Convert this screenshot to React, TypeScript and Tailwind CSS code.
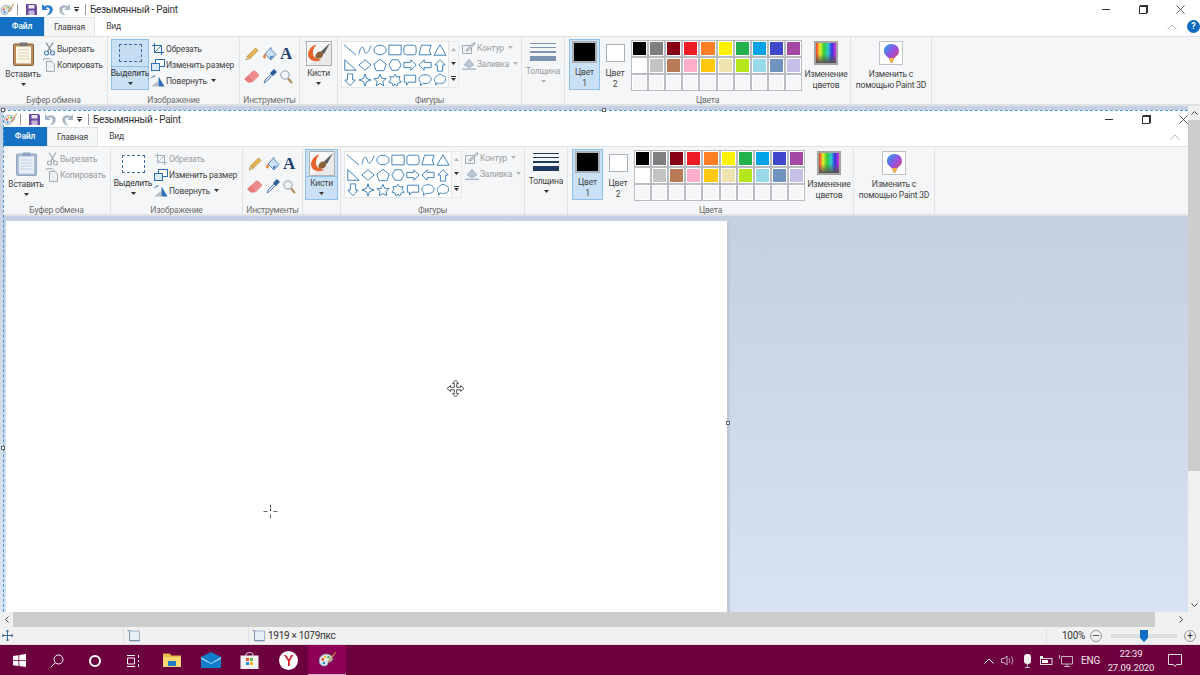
import React from "react";

const font = { fontFamily: 'Roboto,"Noto Sans",sans-serif' };

const Caret = ({ c = "#333" }: { c?: string }) => (
  <svg width="5" height="3" viewBox="0 0 5 3" className="shrink-0"><path d="M0 0h5L2.500 3z" fill={c} /></svg>
);

const PaintLogo = ({ s = 16 }: { s?: number }) => (
  <svg width={s} height={s} viewBox="0 0 16 16" className="shrink-0">
    <path d="M1 9c0-4 4-6 7-5.500 3 .5 5 2.500 4 5-.8 2-3 1-3.500 2.500-.4 1.500-1 2.500-3 2.500C3 13.500 1 12 1 9z" fill="#dfe8f2" stroke="#7c8ea6" strokeWidth=".7" />
    <circle cx="4" cy="8" r="1.200" fill="#e8503a" />
    <circle cx="6" cy="5.800" r="1.100" fill="#f3c32c" />
    <circle cx="8.800" cy="6" r="1" fill="#49a84c" />
    <circle cx="5" cy="11" r="1.100" fill="#2f7fd1" />
    <path d="M8 10L14.500 1.500l.7.6L9 10.800z" fill="#c98a3c" />
  </svg>
);

const Save = () => (
  <svg width="11" height="11" viewBox="0 0 11 11">
    <path d="M0 0h9.500L11 1.500V11H0z" fill="#6a4a9c" />
    <rect x="2.500" y="1" width="6" height="3.500" fill="#e7e3f1" />
    <rect x="2.500" y="6.500" width="6" height="4.500" fill="#c3b5dc" />
  </svg>
);

const Undo = ({ c, flip }: { c: string; flip?: boolean }) => (
  <svg width="11" height="12" viewBox="0 0 11 12" className={flip ? "-scale-x-100" : ""}>
    <path d="M0 0v6h6L3.800 3.900C6 2.800 8.500 4.500 7.500 7.500 7 9 6 10.200 4.500 11.500 8 11 11 8.500 10.800 5 10.500 1.500 6 0 2.400 2.300z" fill={c} />
  </svg>
);

const Clipboard = ({ dim }: { dim?: boolean }) => (
  <svg width="21" height="24" viewBox="0 0 21 24">
    <rect x=".5" y="2" width="20" height="21.500" rx="1" fill={dim ? "#aebfd5" : "#b98a5e"} stroke={dim ? "#8ea4c0" : "#8b6239"} />
    <rect x="3" y="4.500" width="15" height="17" fill={dim ? "#e8eef6" : "#fbf6e5"} />
    <path d="M5 8h11M5 11h11M5 14h11M5 17h11" stroke={dim ? "#c5d2e2" : "#d9d2b8"} />
    <rect x="6.500" y=".5" width="8" height="3.500" fill={dim ? "#8ea4c0" : "#777"} />
  </svg>
);

const Scissors = ({ dim }: { dim?: boolean }) => (
  <svg width="11" height="14" viewBox="0 0 11 14" fill="none" stroke={dim ? "#a4a8ae" : "#4d7fc0"} strokeWidth="1.200">
    <path d="M2 0.500L7.500 9.500M9 0.500L3.500 9.500" stroke={dim ? "#a4a8ae" : "#7b8794"} />
    <circle cx="2.500" cy="11" r="2" />
    <circle cx="8.500" cy="11" r="2" />
  </svg>
);

const Copy = () => (
  <svg width="12" height="14" viewBox="0 0 12 14">
    <path d="M.5 2.500V.5h6l2 2v1" fill="#e7e9ec" stroke="#b3b7bd" />
    <path d="M3.500 3.500h5.500l2.500 2.500v7.500h-8z" fill="#eef0f3" stroke="#a8adb4" />
  </svg>
);

const Crop = ({ dim }: { dim?: boolean }) => (
  <svg width="12" height="12" viewBox="0 0 12 12" fill="none" stroke={dim ? "#9eb0c4" : "#2e6fb3"}>
    <path d="M2.500 0v9.500H12M0 2.500h9.500V12" />
    <path d="M2.500 9.500L10 2" strokeWidth=".8" />
  </svg>
);

const Resize = () => (
  <svg width="14" height="12" viewBox="0 0 14 12" fill="none" stroke="#2e6fb3">
    <rect x="4.500" y=".5" width="9" height="7" fill="#fff" />
    <rect x=".5" y="4.500" width="8" height="7" fill="#dbe8f5" />
  </svg>
);

const Rotate = () => (
  <svg width="14" height="12" viewBox="0 0 14 12">
    <path d="M0 11.500L7 11.500 7 6z" fill="#b9bdc3" />
    <path d="M7.500 11.500V1.500L13.500 11.500z" fill="#2e6fb3" />
    <path d="M0 3.500C1 1.800 2.500 1 4.500 1" fill="none" stroke="#2e6fb3" />
  </svg>
);

const Pencil = () => (
  <svg width="14" height="14" viewBox="0 0 14 14">
    <path d="M2.500 9L10.500 1l2.500 2.500L5 11.500z" fill="#e8b64c" stroke="#a27b2c" strokeWidth=".6" />
    <path d="M2.500 9L1 13l4-1.500z" fill="#f3dfb8" stroke="#a27b2c" strokeWidth=".6" />
  </svg>
);
const Fill = () => (
  <svg width="15" height="14" viewBox="0 0 15 14">
    <path d="M3 7l5-5.500 6 6L9 13z" fill="#cfe0f2" stroke="#5a8cbd" />
    <path d="M8 9.500v3l4-4z" fill="#3a7cc2" />
    <path d="M3 6.500C1.500 8 .5 9.500 1.500 11c1 1 2.500 0 2.200-1.500-.1-1-.3-2-.7-3z" fill="#e5782b" />
    <path d="M7 1L9.200 0l1.300 3z" fill="#8aa7c4" />
  </svg>
);
const Eraser = () => (
  <svg width="15" height="13" viewBox="0 0 15 13">
    <path d="M.5 9L8.500 1.500c1-.9 2-.9 3 0l2.500 2.200c.9 1 .8 2 0 2.800l-5.500 5.500h-4.500z" fill="#ee8b8b" stroke="#d77777" strokeWidth=".5" />
    <path d="M4 12.500L.5 9l3.500-3.500 4 4.500-1.800 2.500z" fill="#e87a7a" />
  </svg>
);
const Picker = () => (
  <svg width="14" height="15" viewBox="0 0 14 15">
    <path d="M1 14l1-3L8 5l1.500 1.500-6 6z" fill="#cfe0ef" stroke="#3b6fa8" strokeWidth=".8" />
    <path d="M7 4l4-4 3 3-4 4z" fill="#2a5f9c" />
  </svg>
);
const Magnifier = () => (
  <svg width="13" height="14" viewBox="0 0 13 14" fill="none">
    <circle cx="5" cy="5" r="4.200" fill="#eef4fa" stroke="#8e9caa" />
    <path d="M8 8.500l4 4.500" stroke="#b08a55" strokeWidth="2" />
  </svg>
);

const Brush = () => (
  <svg width="26" height="25" viewBox="0 0 26 25" className="shrink-0">
    <rect x=".5" y=".5" width="25" height="24" fill="#f7f7f7" stroke="#b0b0b0" />
    <path d="M25 1L25 24 3 24z" fill="#e9e9e9" />
    <path d="M2 13.500C2.500 8 6 4.500 10.500 3.500 8 6.500 6.500 9.500 7 13c.4 3 3 5 8 5.500-2.500 3-12.500 2.500-13-5z" fill="#e8622a" />
    <path d="M9.500 16c-.5-3 2.500-6 5.500-5.500 2.500.6 2.800 3.300 1 5.500-2 2.300-6 2.300-6.500 0z" fill="#8a6236" />
    <path d="M15 10.500l9-8.500-6 11z" fill="#5c5c5c" />
  </svg>
);

const SHAPES: React.ReactNode[] = [
  <path d="M1 2l14 12" />,
  <path d="M1 13C3 3 6 3 7 8s4 6 8-5" />,
  <ellipse cx="8" cy="8" rx="7" ry="5.500" />,
  <rect x="1" y="2.500" width="14" height="11" />,
  <rect x="1" y="2.500" width="14" height="11" rx="3" />,
  <path d="M4 2.500h11L13 9l2 4.500H1z" />,
  <path d="M8 2l7 12H1z" />,
  <path d="M2 2v12h13z" />,
  <path d="M8 2l7 6-7 6-7-6z" />,
  <path d="M8 1.500l7 5.500-2.500 7.500h-9L1 7z" />,
  <path d="M4.500 2h7L15 8l-3.500 6h-7L1 8z" />,
  <path d="M1 5h8V2l6 6-6 6v-3H1z" />,
  <path d="M15 5H7V2L1 8l6 6v-3h8z" />,
  <path d="M5 15V8H2l6-6 6 6h-3v7z" />,
  <path d="M5 1v7H2l6 6.500L14 8h-3V1z" />,
  <path d="M8 1l1.800 5.200L15 8l-5.200 1.800L8 15l-1.800-5.200L1 8l5.200-1.800z" />,
  <path d="M8 1.500l2 4.500 5 .5-3.800 3.200 1.200 5L8 12l-4.400 2.700 1.200-5L1 6.500l5-.5z" />,
  <path d="M8 1.500l2 3 3.700-.5-1 3.500L15 10.500l-3.500 1L10 15l-2-2.500L6 15l-1.500-3.500L1 10.500l2.300-3-1-3.500L6 4.500z" />,
  <path d="M1.500 2.500h13v8h-8L4 14v-3.500H1.500z" />,
  <path d="M8 2c4 0 7 2 7 5s-3 5-7 5c-.8 0-1.500 0-2-.2L3 14.500v-3.700C1.800 9.800 1 8.500 1 7c0-3 3-5 7-5z" />,
  <path d="M5 3c1-2 5-2 6 0 3 0 4 3 3 5 .5 2-1.500 4-4 3.500-1.500 1-4 1-5-.5L3 14v-3C1 10 .5 5 5 3z" />,
];

const ShapeIcon = ({ children }: { children: React.ReactNode }) => (
  <div className="w-[15px] h-[15px] flex items-center justify-center">
    <svg width="14" height="14" viewBox="0 0 16 16" fill="#fff" stroke="#3d80b8" strokeWidth="1.100" strokeLinejoin="round">{children}</svg>
  </div>
);

const COLORS = [
  "#000000", "#7f7f7f", "#880015", "#ed1c24", "#ff7f27", "#fff200", "#22b14c", "#00a2e8", "#3f48cc", "#a349a4",
  "#ffffff", "#c3c3c3", "#b97a57", "#ffaec9", "#ffc90e", "#efe4b0", "#b5e61d", "#99d9ea", "#7092be", "#c8bfe7",
  "#f5f6f7", "#f5f6f7", "#f5f6f7", "#f5f6f7", "#f5f6f7", "#f5f6f7", "#f5f6f7", "#f5f6f7", "#f5f6f7", "#f5f6f7",
];

const Group = ({ w, label, children }: { w: string; label?: string; children: React.ReactNode }) => (
  <div className={`${w} shrink-0 h-full flex flex-col border-r border-[#e2e3e6]`}>
    <div className="flex-1 min-h-0 flex">{children}</div>
    <div className="h-[9px] text-center text-[8.500px] leading-[10px] text-[#6b6b6b]">{label}</div>
  </div>
);

const SmallRow = ({ icon, text, dim, caret }: { icon: React.ReactNode; text: string; dim?: boolean; caret?: boolean }) => (
  <div className={`h-[16px] flex items-center gap-[1px] text-[8.500px] whitespace-nowrap ${dim ? "text-[#9a9da1]" : "text-[#444]"}`}>
    <div className="w-[14px] flex items-center justify-center shrink-0">{icon}</div>
    <span>{text}</span>
    {caret && <span className="ml-[3px] mb-[2px]"><Caret c={dim ? "#b5b5b5" : "#333"} /></span>}
  </div>
);

const Ribbon = ({ inner }: { inner?: boolean }) => (
  <div style={font} className="w-[1200px] shrink-0 h-[106px] flex flex-col bg-white text-[#444] tracking-[-0.2px]">
    {/* title bar */}
    <div className="h-[17px] pt-[2px] flex items-center">
      <PaintLogo s={15} />
      <div className="w-px h-[11px] bg-[#999] ml-[2px] mr-[8px]" />
      <Save />
      <div className="ml-[5px]"><Undo c={inner ? "#a9b6c6" : "#2f7fd1"} /></div>
      <div className="ml-[6px]"><Undo c="#a9b6c6" flip /></div>
      <div className="ml-[4px] flex flex-col items-center gap-[1px]"><div className="w-[5px] h-px bg-[#333]" /><Caret /></div>
      <div className="w-px h-[11px] bg-[#999] ml-[6px] mr-[4px]" />
      <span className="text-[10px] tracking-[-0.3px] text-[#333]">Безымянный - Paint</span>
      <div className="flex-1" />
      <div className="w-[8px] h-px bg-[#333]" />
      <div className="ml-[29px] w-[8px] h-[8px] border border-[#333] bg-white shadow-[1px_-1px_0_0_#333]" />
      <svg width="9" height="9" viewBox="0 0 9 9" className="ml-[29px] mr-[15px]" stroke="#333" strokeWidth=".8"><path d="M.5.5l8 8M8.500.5l-8 8" /></svg>
    </div>
    {/* tabs */}
    <div className="h-[19px] flex items-stretch text-[8.500px]">
      <div className="w-[44px] bg-[#1571c4] text-white flex items-center justify-center font-medium">Файл</div>
      <div className="w-[51px] bg-[#f5f6f7] border-x border-t border-[#e2e3e6] flex items-center justify-center">Главная</div>
      <div className="w-[37px] flex items-center justify-center">Вид</div>
      <div className="flex-1" />
      <svg width="10" height="6" viewBox="0 0 10 6" fill="none" stroke="#b5b5b5" className="self-center mr-[2px]"><path d="M.5 5.500L5 1l4.500 4.500" /></svg>
      {inner ? (
        <div className="ml-[8px] w-[13px]" />
      ) : (
        <div className="self-center ml-[8px] w-[13px] h-[13px] rounded-full bg-[#0f6cc4] text-white text-[9px] font-bold flex items-center justify-center">?</div>
      )}
    </div>
    {/* body */}
    <div className="flex-1 min-h-0 flex bg-[#f5f6f7] border-t border-[#e0e1e3] border-b-[2px] border-b-[#dfe1e5] text-[8.500px]">
      <Group w="w-[108px]" label="Буфер обмена">
        <div className="w-[42px] pl-[4px] pt-[4px] flex flex-col items-center">
          <div className="h-[25px] flex items-center"><Clipboard dim={inner} /></div>
          <div className="mt-[2px] leading-[12px]">Вставить</div>
          <div className="mt-[3px]"><Caret /></div>
        </div>
        <div className="pt-[4px]">
          <SmallRow icon={<Scissors dim={inner} />} text="Вырезать" dim={inner} />
          <SmallRow icon={<Copy />} text="Копировать" dim={inner} />
        </div>
      </Group>
      <Group w="w-[132px]" label="Изображение">
        <div className={`ml-[3px] mt-[2px] w-[38px] h-[51px] flex flex-col items-center border ${inner ? "border-transparent" : "border-[#8fc0e8] bg-[#c9e0f5]"}`}>
          <div className={`w-full h-[27px] flex items-center justify-center ${inner ? "" : "border-b border-[#8fc0e8]"}`}>
            <div className={`w-[23px] h-[18px] border border-dashed border-[#3d6ea5] ${inner ? "bg-white" : "bg-[#c6dcf3]"}`} />
          </div>
          <div className="leading-[12px] whitespace-nowrap text-[#333]">Выделить</div>
          <div className="mt-[3px]"><Caret /></div>
        </div>
        <div className="pl-[2px] pt-[4px]">
          <SmallRow icon={<Crop dim={inner} />} text="Обрезать" dim={inner} />
          <SmallRow icon={<Resize />} text="Изменить размер" />
          <SmallRow icon={<Rotate />} text="Повернуть" caret />
        </div>
      </Group>
      <Group w="w-[60px]" label="Инструменты">
        <div className="pl-[2px] pt-[5px] grid grid-cols-[19px_17px_16px] grid-rows-[23px_23px] justify-items-center items-center">
          <Pencil />
          <Fill />
          <span style={{ fontFamily: '"Liberation Serif",serif' }} className="text-[17px] leading-none font-bold text-[#1f3f6e]">A</span>
          <Eraser />
          <Picker />
          <Magnifier />
        </div>
      </Group>
      <Group w="w-[38px]">
        <div className={`ml-[2px] mt-[2px] w-[33px] h-[51px] flex flex-col items-center border ${inner ? "border-[#8fc0e8] bg-[#c9e0f5]" : "border-transparent"}`}>
          <div className={`h-[27px] flex items-center ${inner ? "w-full justify-center border-b border-[#8fc0e8]" : ""}`}><Brush /></div>
          <div className="leading-[12px]">Кисти</div>
          <div className="mt-[3px]"><Caret /></div>
        </div>
      </Group>
      <Group w="w-[184px]" label="Фигуры">
        <div className="ml-[3px] mt-[4px] w-[108px] h-[47px] bg-white border border-[#e3e5e8] grid grid-cols-7 content-start">
          {SHAPES.map((s, i) => <ShapeIcon key={i}>{s}</ShapeIcon>)}
        </div>
        <div className="mt-[4px] w-[10px] h-[47px] flex flex-col items-center justify-around bg-[#f5f6f7] border border-l-0 border-[#e8e9eb]">
          <svg width="5" height="3" viewBox="0 0 5 3"><path d="M0 3h5L2.500 0z" fill="#b5b5b5" /></svg>
          <Caret />
          <div className="flex flex-col items-center gap-[1px]"><div className="w-[5px] h-px bg-[#333]" /><Caret /></div>
        </div>
        <div className="pl-[3px] pt-[3px]">
          <SmallRow dim caret icon={<svg width="14" height="12" viewBox="0 0 14 12" fill="none" stroke="#a3acb7"><path d="M.5 3.500h9v8h-9z" fill="#eef0f3" /><path d="M4 8l8-7.500 1.500 1L5 9.500z" fill="#ccd3db" /></svg>} text="Контур" />
          <SmallRow dim caret icon={<svg width="14" height="12" viewBox="0 0 14 12"><path d="M0 10.500h14V12H0z" fill="#a9bfd6" /><path d="M2 7l5-6 5 6-5 3z" fill="#b9c6d4" stroke="#9daab8" strokeWidth=".6" /></svg>} text="Заливка" />
        </div>
      </Group>
      <Group w="w-[43px]">
        <div className="w-full pt-[6px] flex flex-col items-center">
          <div className="w-[26px] flex flex-col">
            {[1, 1, 2, 4].map((h, i) => (
              <div key={i} className={`${h === 1 ? "h-px" : h === 2 ? "h-[2px]" : "h-[5px]"} mb-[3px] ${inner ? "bg-[#1e3a5f]" : "bg-[#7f93b2]"}`} />
            ))}
          </div>
          <div className={`mt-[1px] leading-[12px] ${inner ? "" : "text-[#9a9da1]"}`}>Толщина</div>
          <div className="mt-[3px]"><Caret c={inner ? "#333" : "#b5b5b5"} /></div>
        </div>
      </Group>
      <Group w="w-[286px]" label="Цвета">
        <div className="ml-[4px] mt-[2px] w-[31px] h-[51px] flex flex-col items-center border border-[#8fc0e8] bg-[#c9e0f5]">
          <div className="mt-[1px] w-[25px] h-[25px] bg-black border-[2px] border-[#a9b0b8]" />
          <div className="mt-[4px] leading-[11px] text-center">Цвет<br />1</div>
        </div>
        <div className="ml-[4px] mt-[2px] w-[22px] h-[51px] flex flex-col items-center">
          <div className="mt-[5px] w-[19px] h-[19px] bg-white border border-[#a9b0b8]" />
          <div className="mt-[6px] leading-[11px] text-center">Цвет<br />2</div>
        </div>
        <div className="ml-[5px] mt-[3px] w-[171px] h-[51px] grid grid-cols-10">
          {COLORS.map((c, i) => (
            <div key={i} className="h-[17px] border border-[#b9bcc0] p-[1px] bg-white"><div className="w-full h-full" style={{ background: c }} /></div>
          ))}
        </div>
        <div className="w-[48px] pt-[4px] flex flex-col items-center">
          <div className="w-[24px] h-[24px] border-[2px] border-[#a4a4a4] bg-[linear-gradient(to_bottom,rgba(255,255,255,0)_55%,#555),linear-gradient(to_right,#e33,#ee3,#3c3,#3cc,#33d,#d3d)]" />
          <div className="mt-[4px] leading-[11px] text-center">Изменение<br />цветов</div>
        </div>
      </Group>
      <Group w="w-[81px]">
        <div className="w-full pt-[4px] flex flex-col items-center">
          <div className="w-[24px] h-[24px] bg-white border border-[#bfc2c6] flex items-center justify-center">
            <svg width="15" height="19" viewBox="0 0 15 19">
              <defs>
                <linearGradient id={inner ? "p3a" : "p3b"} x1="0" y1="0" x2="1" y2="1">
                  <stop offset="0" stopColor="#19a7f0" />
                  <stop offset=".5" stopColor="#9a4fe0" />
                  <stop offset="1" stopColor="#f0473f" />
                </linearGradient>
              </defs>
              <path d="M7.500 0C12 0 15 3 15 7c0 4-3 5-4.500 7-1 1.300-2 5-3 5s-2-3.700-3-5C3 12 0 11 0 7c0-4 3-7 7.500-7z" fill={`url(#${inner ? "p3a" : "p3b"})`} />
              <path d="M5 14c1 1.500 1.500 5 2.500 5s1.500-3.500 2.500-5z" fill="#f7b733" />
            </svg>
          </div>
          <div className="mt-[4px] leading-[11px] text-center whitespace-nowrap">Изменить с<br />помощью Paint 3D</div>
        </div>
      </Group>
    </div>
  </div>
);

const Handle = ({ cls }: { cls: string }) => (
  <div className={`absolute w-[4px] h-[4px] bg-white border border-[#666] ${cls}`} />
);

const TaskIcon = ({ children, under }: { children: React.ReactNode; under?: boolean }) => (
  <div className="w-[39px] flex flex-col items-center">
    <div className="flex-1 flex items-center justify-center">{children}</div>
    <div className={`w-[32px] h-[1px] ${under ? "bg-[#d9a8c4]" : ""}`} />
  </div>
);

const Taskbar = () => (
  <div style={font} className="h-[31px] shrink-0 bg-[#6d003f] flex items-stretch text-white">
    <div className="w-[38px] flex items-center justify-center">
      <svg width="13" height="13" viewBox="0 0 13 13" fill="#fff"><path d="M0 2l5.500-.8v5H0zM6.300 1.100L13 0v6.200H6.300zM0 7h5.500v5L0 11.200zM6.300 7H13v6l-6.700-1z" /></svg>
    </div>
    <div className="w-[38px] flex items-center justify-center">
      <svg width="14" height="14" viewBox="0 0 14 14" fill="none" stroke="#fff" strokeWidth="1"><circle cx="8.500" cy="5.500" r="4.500" /><path d="M5.200 8.800L.8 13.200" /></svg>
    </div>
    <div className="w-[38px] flex items-center justify-center">
      <div className="w-[12px] h-[12px] rounded-full border-[2px] border-white" />
    </div>
    <div className="w-[38px] flex items-center justify-center">
      <svg width="13" height="12" viewBox="0 0 13 12" fill="none" stroke="#fff" strokeWidth="1"><path d="M0 .5h8M0 11.500h8M.5 3h7v6h-7zM11.500 0v3M11.500 5v2M11.500 9v3" /></svg>
    </div>
    <TaskIcon under>
      <svg width="18" height="16" viewBox="0 0 18 16"><path d="M0 1.500h6.500l2 2H18V15H0z" fill="#e9b949" /><path d="M0 5h18v10H0z" fill="#f8d775" /><rect x="5" y="9" width="8" height="5" fill="#1f7bc4" /></svg>
    </TaskIcon>
    <TaskIcon>
      <svg width="20" height="16" viewBox="0 0 20 16"><path d="M0 5l10-5 10 5v11H0z" fill="#0f7dc7" /><path d="M0 5l10 6 10-6v2l-10 5L0 7z" fill="#9ed0ef" /></svg>
    </TaskIcon>
    <TaskIcon>
      <svg width="19" height="18" viewBox="0 0 19 18"><path d="M6 5V3.500C6 1 13 1 13 3.500V5" fill="none" stroke="#eee" /><rect x=".5" y="4.500" width="18" height="13.500" fill="#f4f4f4" /><rect x="6" y="7" width="3" height="3" fill="#e85a2b" /><rect x="10" y="7" width="3" height="3" fill="#6cb33f" /><rect x="6" y="11" width="3" height="3" fill="#1f8fd8" /><rect x="10" y="11" width="3" height="3" fill="#f3b51b" /></svg>
    </TaskIcon>
    <TaskIcon under>
      <svg width="19" height="19" viewBox="0 0 19 19"><circle cx="9.500" cy="9.500" r="9.500" fill="#fff" /><path d="M5 4l4 6v5h1.800v-5l3.500-6h-2l-2.400 4.300L7 4z" fill="#d81e2a" /></svg>
    </TaskIcon>
    <div className="w-[38px] bg-[#8c0057] border-b-[2px] border-[#d9a8c4] flex items-center justify-center"><PaintLogo s={19} /></div>
    <div className="flex-1" />
    <div className="flex items-center text-[#f1e6ec]">
      <svg width="10" height="6" viewBox="0 0 10 6" fill="none" stroke="#fff" className="mr-[7px]"><path d="M.5 5.500L5 1l4.500 4.500" /></svg>
      <svg width="13" height="11" viewBox="0 0 13 11" fill="none" stroke="#ddd" strokeWidth=".8" className="mr-[9px]"><path d="M.5 3.500h2.500L6 1v9L3 7.500H.5zM8 3c1 1.500 1 3.500 0 5M10.500 1.500c1.700 2.500 1.700 5.500 0 8" /></svg>
      <svg width="9" height="14" viewBox="0 0 9 14" className="mr-[8px]"><rect x="1" y="0" width="7" height="10" rx="3" fill="#f2f2f2" /><path d="M4.500 10v4M2 13.500h5" stroke="#bbb" /></svg>
      <svg width="13" height="10" viewBox="0 0 13 10" className="mr-[6px]"><rect x=".5" y="2.500" width="11.500" height="6" fill="none" stroke="#ddd" /><rect x="2" y="4" width="6" height="3" fill="#fff" /><path d="M0 0h3v2H0z" fill="#eee" /></svg>
      <svg width="14" height="12" viewBox="0 0 14 12" fill="none" stroke="#ddd" strokeWidth=".8" className="mr-[8px]"><path d="M2.500 1.500H13.500V9H2.500zM5 11.500h6M8 9v2.500M0.500 0v3.500" /></svg>
      <span className="mr-[7px] text-[10px] tracking-[-0.2px]">ENG</span>
      <div className="w-[48px] text-center text-[9.500px] tracking-[-0.1px] leading-[14px]">22:39<br />27.09.2020</div>
      <svg width="14" height="13" viewBox="0 0 14 13" fill="none" stroke="#ddd" className="ml-[13px] mr-[18px]"><path d="M.5.5h13v10H8.500L7 12.500 5.500 10.500H.5z" /></svg>
    </div>
  </div>
);

const DimIcon = () => (
  <svg width="13" height="12" viewBox="0 0 13 12" fill="#fff" stroke="#7b94ad"><path d="M2.500 1h10v10h-10z" fill="#e8eef5" stroke="#9fb2c6" /><path d="M.5.500h2v10h10" fill="none" /></svg>
);

export default function App() {
  return (
    <div className="relative w-[1200px] h-[675px] overflow-hidden flex flex-col bg-white">
      <Ribbon />
      {/* middle */}
      <div className="h-[506px] shrink-0 flex">
        <div className="relative w-[1188px] shrink-0 overflow-hidden bg-[linear-gradient(to_bottom,#c6d0e0,#dae4f2)] pl-[3px] pt-[4px] flex flex-col">
          <Ribbon inner />
          <div className="flex-1 min-h-0 pt-[5px] pl-[3px] overflow-hidden bg-[linear-gradient(to_bottom,#c4cfdf,#d8e3f2)]">
            <div className="w-[721px] h-[500px] bg-white shadow-[3px_0_0_0_#bfc9d8]" />
          </div>
          <div className="absolute left-[3px] top-[4px] right-0 border-t border-dashed border-[#4d9ad8]" />
          <div className="absolute left-[3px] top-[4px] bottom-0 border-l border-dashed border-[#4d9ad8]" />
          <Handle cls="left-[1px] top-[2px]" />
          <Handle cls="left-[602px] top-[2px]" />
          <Handle cls="left-[1px] top-[340px]" />
          <Handle cls="left-[726px] top-[315px]" />
          {/* cursors */}
          <svg width="19" height="19" viewBox="0 0 19 19" className="absolute left-[446px] top-[273px]" fill="#fff" stroke="#555" strokeWidth="1">
            <path d="M9.500 1l3 3.500h-1.800v3.800h3.800V6.500l3.500 3-3.500 3v-1.800h-3.800v3.800h1.800l-3 3.500-3-3.500h1.800v-3.800H4.500v1.800l-3.500-3 3.500-3v1.800h3.800V4.500H6.500z" />
          </svg>
          <svg width="17" height="17" viewBox="0 0 17 17" className="absolute left-[262px] top-[397px]" stroke="#666" strokeWidth="1">
            <path d="M8.500 1.500v4M8.500 11.500v4M1.500 8.500h4M11.500 8.500h4" />
            <rect x="8" y="6" width="1" height="2" fill="#222" stroke="none" />
          </svg>
        </div>
        <div className="w-[12px] shrink-0 bg-[#f0f0f0] flex flex-col items-center">
          <div className="h-[14px] flex items-center">
            <svg width="7" height="4" viewBox="0 0 7 4" fill="none" stroke="#444"><path d="M.5 3.500l3-3 3 3" /></svg>
          </div>
          <div className="w-full h-[351px] bg-[#cdcdcd]" />
          <div className="flex-1" />
          <div className="h-[14px] flex items-center">
            <svg width="7" height="4" viewBox="0 0 7 4" fill="none" stroke="#444"><path d="M.5.500l3 3 3-3" /></svg>
          </div>
        </div>
      </div>
      {/* horizontal scrollbar */}
      <div className="h-[15px] shrink-0 bg-[#f0f0f0] flex items-center">
        <div className="w-[13px] flex justify-center"><svg width="4" height="7" viewBox="0 0 4 7" fill="none" stroke="#444"><path d="M3.500.5l-3 3 3 3" /></svg></div>
        <div className="w-[1142px] h-full bg-[#cdcdcd]" />
        <div className="flex-1" />
        <div className="w-[38px] flex justify-center"><svg width="4" height="7" viewBox="0 0 4 7" fill="none" stroke="#444"><path d="M.5.500l3 3-3 3" /></svg></div>
      </div>
      {/* status bar */}
      <div style={font} className="h-[18px] shrink-0 bg-[#f1f1f1] border-b border-[#dcdcdc] flex items-stretch text-[10px] tracking-[-0.3px] text-[#333]">
        <div className="w-[124px] flex items-center pl-[2px] border-r border-[#e2e2e2]">
          <svg width="11" height="11" viewBox="0 0 11 11" fill="none" stroke="#3a6a98"><path d="M5.500 0v11M0 5.500h11M4 1.500L5.500 0 7 1.500M4 9.500L5.500 11 7 9.500M1.500 4L0 5.500 1.500 7M9.500 4L11 5.500 9.500 7" /></svg>
        </div>
        <div className="w-[125px] flex items-center pl-[3px] border-r border-[#e2e2e2]">
          <DimIcon />
        </div>
        <div className="w-[798px] flex items-center pl-[3px] gap-[3px] border-r border-[#e2e2e2]">
          <DimIcon />
          <span>1919 × 1079пкс</span>
        </div>
        <div className="flex-1 flex items-center pl-[15px]">
          <span>100%</span>
          <div className="ml-[5px] w-[12px] h-[12px] rounded-full border border-[#999] flex items-center justify-center"><div className="w-[6px] h-px bg-[#555]" /></div>
          <div className="ml-[9px] w-[66px] h-[4px] bg-[#dcdfe2] flex items-center justify-center">
            <svg width="8" height="12" viewBox="0 0 8 12"><path d="M0 0h8v8l-4 4-4-4z" fill="#0f6cc4" /></svg>
          </div>
          <div className="ml-[7px] w-[12px] h-[12px] rounded-full border border-[#999] flex items-center justify-center text-[10px] leading-none">+</div>
        </div>
      </div>
      <Taskbar />
    </div>
  );
}
